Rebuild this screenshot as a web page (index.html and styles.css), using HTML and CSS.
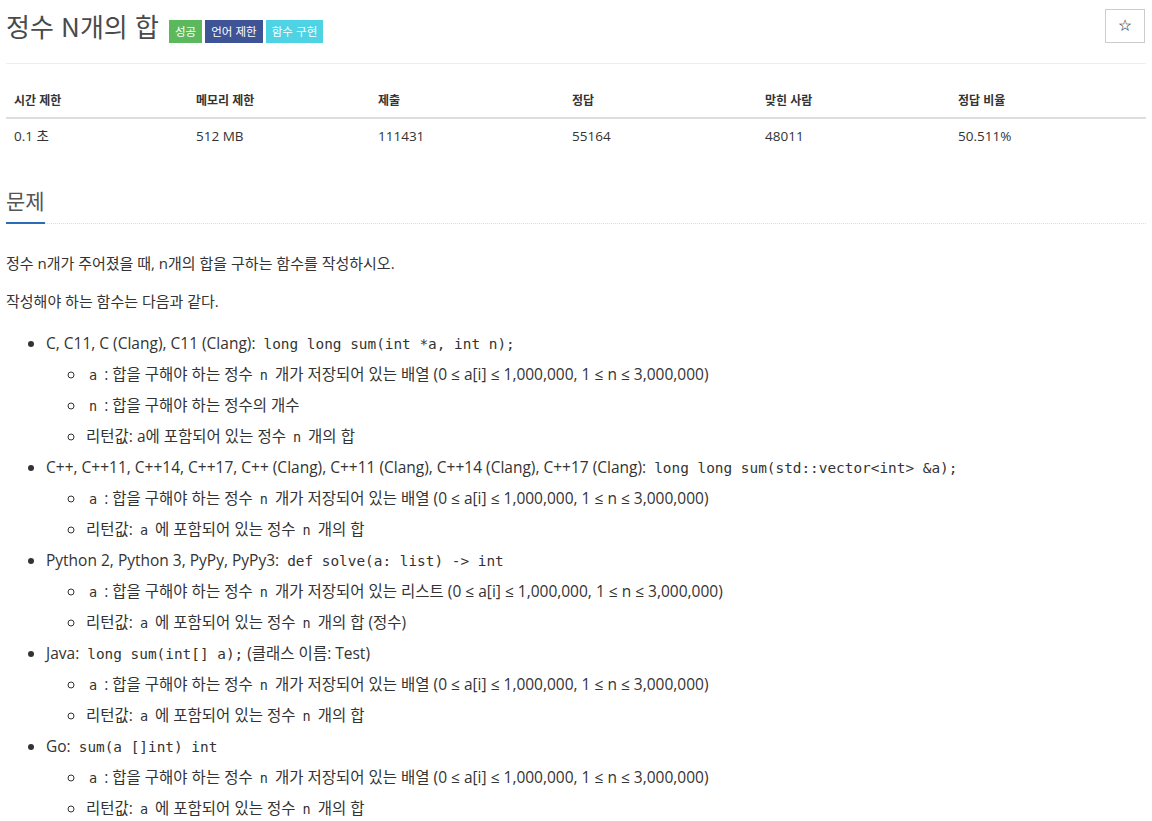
FILE: index.html
```html
<!DOCTYPE html>
<html lang="ko">
<head>
<meta charset="utf-8">
<link rel="stylesheet" href="styles.css">
</head>
<body>
<div class="container">
  <div class="page-header">
    <h1 class="title">정수 N개의 합 <span class="labels"><span class="label label-success">성공</span><span class="label label-lang">언어 제한</span><span class="label label-func">함수 구현</span></span></h1>
    <button class="star-btn" type="button">☆</button>
  </div>
  <table class="info">
    <thead>
      <tr><th class="c1">시간 제한</th><th class="c2">메모리 제한</th><th class="c3">제출</th><th class="c4">정답</th><th class="c5">맞힌 사람</th><th class="c6">정답 비율</th></tr>
    </thead>
    <tbody>
      <tr><td>0.1 초 </td><td>512 MB</td><td>111431</td><td>55164</td><td>48011</td><td>50.511%</td></tr>
    </tbody>
  </table>
  <section class="problem">
    <div class="headline"><h2>문제</h2></div>
    <div class="desc">
      <p>정수 n개가 주어졌을 때, n개의 합을 구하는 함수를 작성하시오.</p>
      <p>작성해야 하는 함수는 다음과 같다.</p>
      <ul class="outer">
        <li>C, C11, C (Clang), C11 (Clang):&nbsp; <code>long long sum(int *a, int n);</code>
          <ul class="inner">
            <li><code class="s">a</code> : 합을 구해야 하는 정수 <code class="s">n</code> 개가 저장되어 있는 배열 (0 ≤ a[i] ≤ 1,000,000, 1 ≤ n ≤ 3,000,000)</li>
            <li><code class="s">n</code> : 합을 구해야 하는 정수의 개수</li>
            <li>리턴값: a에 포함되어 있는 정수 <code class="s">n</code> 개의 합</li>
          </ul>
        </li>
        <li>C++, C++11, C++14, C++17, C++ (Clang), C++11 (Clang), C++14 (Clang), C++17 (Clang):&nbsp; <code>long long sum(std::vector&lt;int&gt; &amp;a);</code>
          <ul class="inner">
            <li><code class="s">a</code> : 합을 구해야 하는 정수 <code class="s">n</code> 개가 저장되어 있는 배열 (0 ≤ a[i] ≤ 1,000,000, 1 ≤ n ≤ 3,000,000)</li>
            <li>리턴값: <code class="s">a</code> 에 포함되어 있는 정수 <code class="s">n</code> 개의 합</li>
          </ul>
        </li>
        <li>Python 2, Python 3, PyPy, PyPy3:&nbsp; <code>def solve(a: list) -&gt; int</code>
          <ul class="inner">
            <li><code class="s">a</code> : 합을 구해야 하는 정수 <code class="s">n</code> 개가 저장되어 있는 리스트 (0 ≤ a[i] ≤ 1,000,000, 1 ≤ n ≤ 3,000,000)</li>
            <li>리턴값: <code class="s">a</code> 에 포함되어 있는 정수 <code class="s">n</code> 개의 합 (정수)</li>
          </ul>
        </li>
        <li>Java:&nbsp; <code>long sum(int[] a);</code> (클래스 이름: Test)
          <ul class="inner">
            <li><code class="s">a</code> : 합을 구해야 하는 정수 <code class="s">n</code> 개가 저장되어 있는 배열 (0 ≤ a[i] ≤ 1,000,000, 1 ≤ n ≤ 3,000,000)</li>
            <li>리턴값: <code class="s">a</code> 에 포함되어 있는 정수 <code class="s">n</code> 개의 합</li>
          </ul>
        </li>
        <li>Go:&nbsp; <code>sum(a []int) int</code>
          <ul class="inner">
            <li><code class="s">a</code> : 합을 구해야 하는 정수 <code class="s">n</code> 개가 저장되어 있는 배열 (0 ≤ a[i] ≤ 1,000,000, 1 ≤ n ≤ 3,000,000)</li>
            <li>리턴값: <code class="s">a</code> 에 포함되어 있는 정수 <code class="s">n</code> 개의 합</li>
          </ul>
        </li>
      </ul>
    </div>
  </section>
</div>
</body>
</html>
```
FILE: styles.css
```css
* { box-sizing: border-box; }
html, body { margin: 0; padding: 0; background: #fff; }
body {
  font-family: "Open Sans", "Noto Sans CJK KR", sans-serif;
  font-size: 14px;
  color: #333;
  line-height: 1.42857;
}
.container { width: 1140px; margin: 0 auto; }
.page-header {
  display: flex;
  justify-content: space-between;
  align-items: flex-start;
  padding-top: 9px;
  padding-bottom: 20px;
  border-bottom: 1px solid #eee;
}
.title {
  margin: 0;
  font-family: "Noto Sans CJK KR", "Open Sans", sans-serif;
  font-size: 26px;
  font-weight: 400;
  color: #4a4a4a;
  line-height: 34px;
  display: flex;
  align-items: center;
  gap: 2px;
}
.labels { display: inline-flex; gap: 3px; margin-left: 8px; margin-top: 11px; }
.label {
  display: inline-block;
  font-size: 11.5px;
  font-weight: 400;
  line-height: 23px;
  padding: 0 6px;
  color: #fff;
  font-family: "Noto Sans CJK KR", sans-serif;
}
.label-success { background: #5cb85c; }
.label-lang { background: #3e5496; }
.label-func { background: #4dd3e3; }
.star-btn {
  width: 40px;
  height: 34px;
  background: #fff;
  border: 1px solid #ccc;
  font-size: 14px;
  color: #333;
  padding: 0;
  margin-right: 1px;
}
.info {
  width: 100%;
  border-collapse: collapse;
  margin-top: 20px;
  font-size: 12px;
}
.info th {
  text-align: left;
  font-weight: 700;
  padding: 8px;
  border-bottom: 2px solid #ddd;
}
.info td { padding: 8px; font-size: 13.5px; }
.c1, .c2 { width: 182px; }
.c3 { width: 194px; }
.c4, .c5 { width: 193px; }
.headline {
  margin-top: 32px;
  border-bottom: 1px dotted #ddd;
}
.headline h2 {
  display: inline-block;
  margin: 0;
  font-size: 21px;
  font-weight: 400;
  color: #555;
  padding-bottom: 8px;
  border-bottom: 2px solid #2b6cb8;
  margin-bottom: -1px;
  line-height: 28px;
  font-family: "Noto Sans CJK KR", sans-serif;
}
.desc { font-size: 15px; color: #333; padding-top: 29px; }
.desc p { margin: 0 0 17px; line-height: 21px; }
.outer { margin: 0; padding-left: 40px; font-size: 15.5px; }
.outer li { line-height: 21px; margin-top: 10px; }
.outer > li:first-child { margin-top: 21px; }
.inner { margin: 0; padding-left: 40px; list-style-type: circle; }
code {
  font-family: "DejaVu Sans Mono", monospace;
  font-size: 14.4px;
  line-height: 1;
}
code.s { padding: 0 3px; font-size: 13.5px; }
```
